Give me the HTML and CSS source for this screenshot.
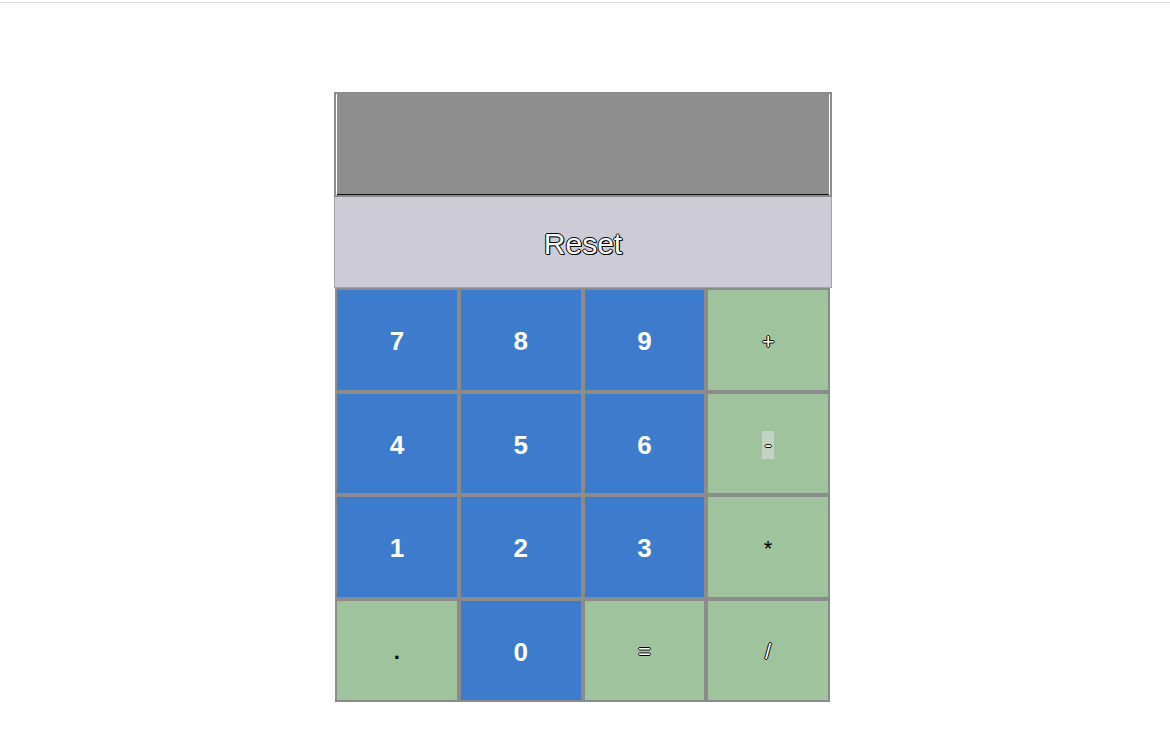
FILE: index.html
```html
<!DOCTYPE html>
<html lang="en">
<head>
<meta charset="utf-8">
<title>Calculator</title>
<link rel="stylesheet" href="styles.css">
</head>
<body>
<div class="topline"></div>
<main class="calc">
  <div class="display"></div>
  <button class="reset">Reset</button>
  <div class="keys">
    <button class="key num">7</button>
    <button class="key num">8</button>
    <button class="key num">9</button>
    <button class="key op outl">+</button>
    <button class="key num">4</button>
    <button class="key num">5</button>
    <button class="key num">6</button>
    <button class="key op outl"><span class="hl">-</span></button>
    <button class="key num">1</button>
    <button class="key num">2</button>
    <button class="key num">3</button>
    <button class="key op dark">*</button>
    <button class="key op dark dot">.</button>
    <button class="key num">0</button>
    <button class="key op outl">=</button>
    <button class="key op outl">/</button>
  </div>
</main>
</body>
</html>
```
FILE: styles.css
```css
html, body {
  margin: 0;
  padding: 0;
  background: #fff;
  font-family: "Liberation Sans", Arial, sans-serif;
}
.topline {
  margin-top: 2px;
  height: 1px;
  background: #dcdcdc;
}
.calc {
  width: 498px;
  margin: 89px 0 0 334px;
  display: flex;
  flex-direction: column;
}
.display {
  height: 105px;
  box-sizing: border-box;
  background: #8e8e8e;
  border: 2px solid #8c8c8c;
  box-shadow: inset 1px 0 0 #fff, inset -1px 0 0 #fff, inset 0 -1px 0 #111;
}
.reset {
  height: 91px;
  margin: 0;
  box-sizing: border-box;
  background: #cdcbd6;
  border: 1px solid #a4a4a8;
  border-top: none;
  font-family: "Liberation Sans", Arial, sans-serif;
  font-size: 30px;
  color: #fff;
  text-shadow: -1px 0 0 #000, 1px 0 0 #000, 0 -1px 0 #000, 0 1px 0 #000, 1px 1px 0 #000;
  padding: 4px 0 0 0;
}
.keys {
  margin: 0 2px 0 1px;
  display: grid;
  grid-template-columns: repeat(4, 1fr);
  grid-auto-rows: 103.5px;
}
.key {
  margin: 0;
  padding: 4px 0 0 0;
  box-sizing: border-box;
  border: 2px solid #8b8b8b;
  display: flex;
  align-items: center;
  justify-content: center;
  font-family: "Liberation Sans", Arial, sans-serif;
}
.num {
  background: #3d7ccc;
  color: #fff;
  font-weight: bold;
  font-size: 26px;
}
.op {
  background: #9fc39d;
  font-size: 22px;
}
.outl {
  color: #fff;
  text-shadow: -1px 0 0 #000, 1px 0 0 #000, 0 -1px 0 #000, 0 1px 0 #000;
}
.dark {
  color: #000;
}
.dot {
  font-size: 22px;
  font-weight: bold;
}
.hl {
  display: inline-block;
  width: 12px;
  height: 28px;
  line-height: 28px;
  text-align: center;
  background: #c4d4c2;
}
```
